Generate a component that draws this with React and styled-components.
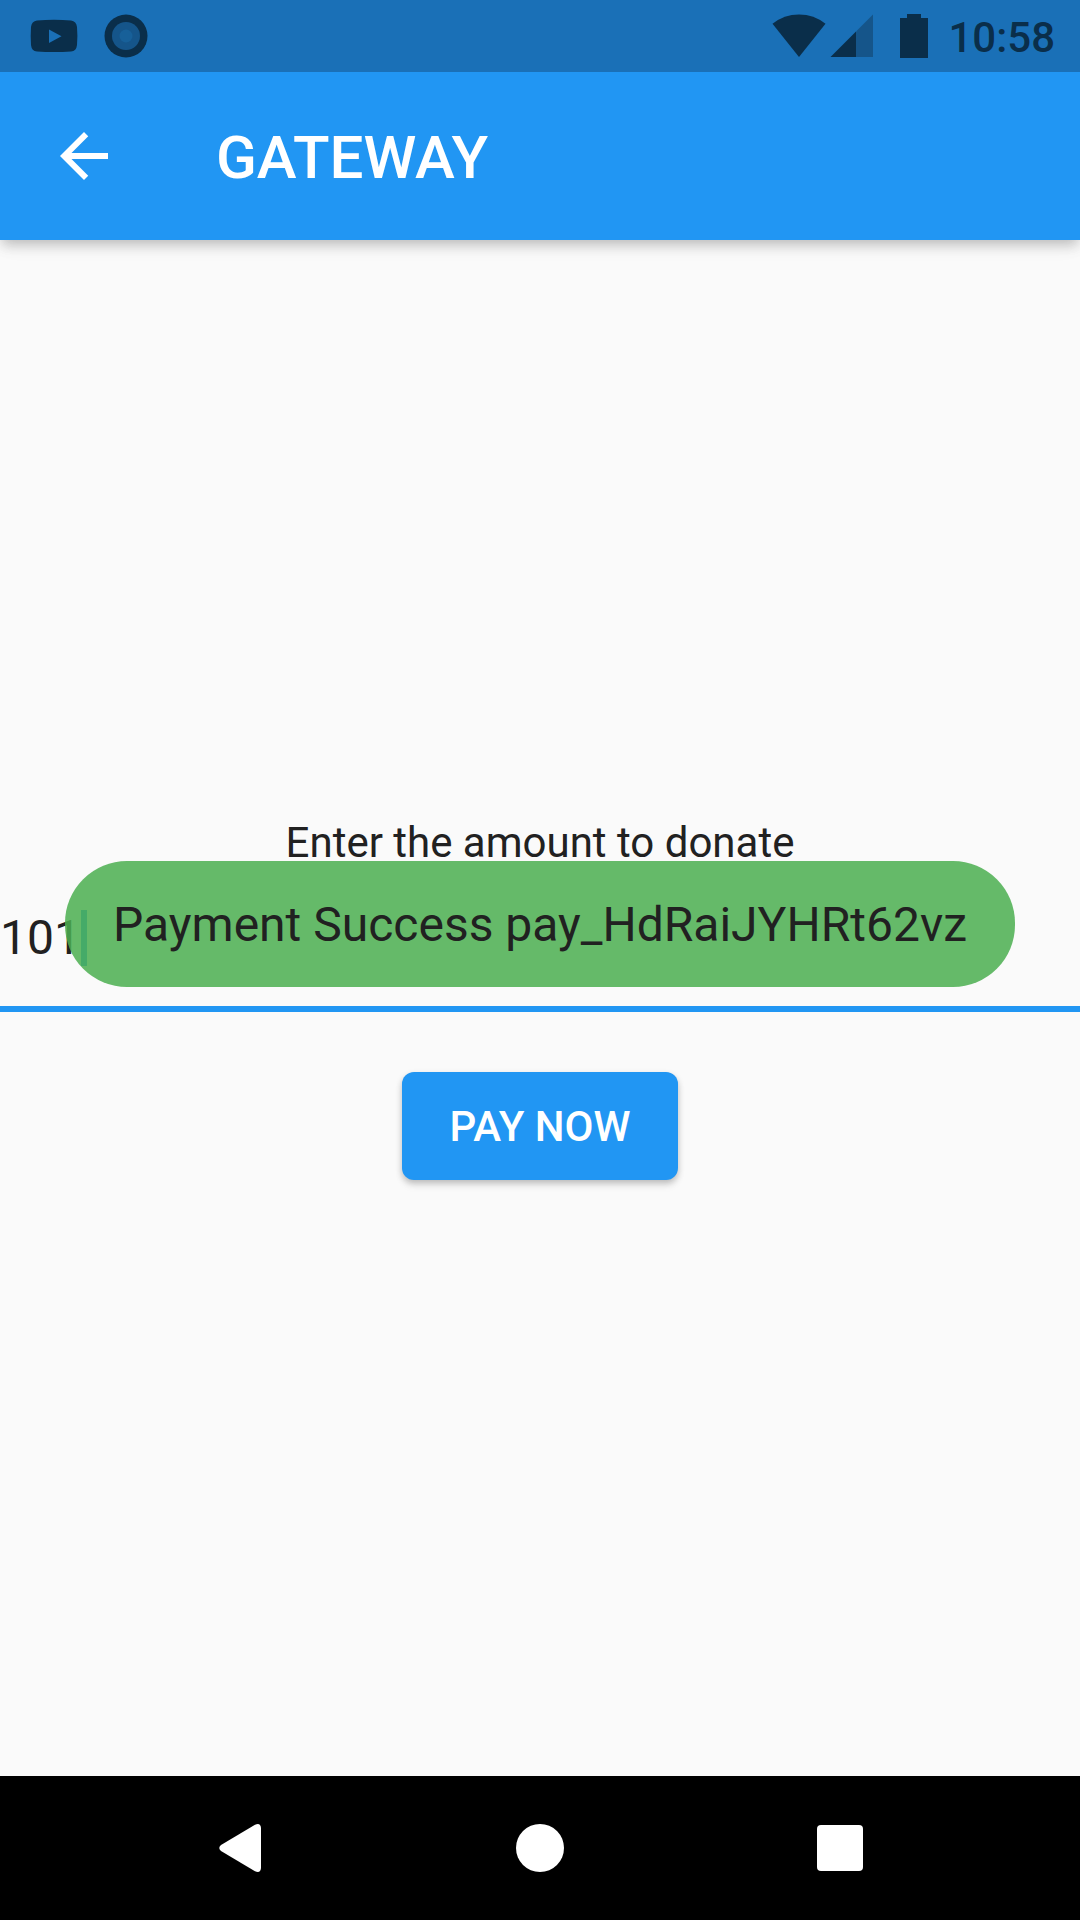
import React, { useState } from "react";
import styled, { createGlobalStyle } from "styled-components";

const GlobalStyle = createGlobalStyle`
  *, *::before, *::after { box-sizing: border-box; }
  body {
    margin: 0;
    background: #fafafa;
    color: #212121;
    font-family: Roboto, "Noto Sans", sans-serif;
  }
  button, input { font-family: inherit; }
`;

const Screen = styled.div`
  position: relative;
  display: flex;
  flex-direction: column;
  min-height: 100vh;
`;

const StatusBar = styled.div`
  position: relative;
  z-index: 1;
  display: flex;
  align-items: center;
  justify-content: space-between;
  height: 72px;
  padding: 0 25px 0 30px;
  background: #1a70b7;
  color: #0a2e4a;
`;

const StatusGroup = styled.div`
  display: flex;
  align-items: center;
  gap: ${(p) => p.$gap}px;
`;

const Clock = styled.time`
  padding-top: 4px;
  font-size: 42px;
  line-height: 48px;
  font-weight: 500;
`;

const BatterySlot = styled.span`
  display: flex;
  padding: 0 16px 0 22px;
`;

const AppBar = styled.header`
  display: flex;
  align-items: center;
  gap: 48px;
  height: 168px;
  padding: 0 48px 0 12px;
  background: #2196f3;
  color: #fff;
  box-shadow: 0 6px 12px -3px rgba(0, 0, 0, 0.2),
    0 9px 12px rgba(0, 0, 0, 0.05), 0 3px 24px rgba(0, 0, 0, 0.05);
`;

const IconButton = styled.button`
  display: flex;
  align-items: center;
  justify-content: center;
  width: 144px;
  height: 144px;
  padding: 0;
  border: 0;
  background: none;
  color: inherit;
`;

const Title = styled.h1`
  margin: 0;
  padding: 4px 0 0 12px;
  font-size: 60px;
  line-height: 72px;
  font-weight: 500;
`;

const Content = styled.main`
  flex: 1;
  display: flex;
  flex-direction: column;
  align-items: center;
  justify-content: center;
`;

const Label = styled.label`
  font-size: 42px;
  line-height: 50px;
`;

const Field = styled.div`
  position: relative;
  width: 100%;
  font-size: 48px;
  line-height: 56px;
`;

const AmountInput = styled.input`
  display: block;
  width: 100%;
  height: 144px;
  padding: 0;
  border: 0;
  border-bottom: 6px solid #2196f3;
  outline: none;
  background: transparent;
  color: inherit;
  font-size: inherit;
  line-height: inherit;
  caret-color: transparent;
`;

const Caret = styled.span`
  position: absolute;
  top: 42px;
  width: 6px;
  height: 56px;
  background: #2196f3;
`;

const PayButton = styled.button`
  height: 108px;
  margin: 60px 0 18px;
  padding: 2px 48px 0;
  border: 0;
  border-radius: 12px;
  background: #2196f3;
  color: #fff;
  font-size: 42px;
  line-height: 48px;
  font-weight: 500;
  box-shadow: 0 3px 6px rgba(0, 0, 0, 0.22), 0 6px 9px rgba(0, 0, 0, 0.06);
`;

const ToastLayer = styled.div`
  position: absolute;
  inset: 72px 0 144px;
  display: flex;
  align-items: center;
  justify-content: center;
  pointer-events: none;
`;

const Toast = styled.div`
  padding: 35px 48px 33px;
  border-radius: 62px;
  background: rgba(76, 175, 80, 0.86);
  font-size: 48px;
  line-height: 58px;
  white-space: nowrap;
`;

const NavBar = styled.nav`
  display: flex;
  justify-content: center;
  height: 144px;
  padding: 0 90px;
  background: #000;
`;

const NavButton = styled.button`
  flex: 1;
  display: flex;
  align-items: center;
  justify-content: center;
  padding: 0;
  border: 0;
  background: none;
  color: #fff;
`;

const VideoIcon = () => (
  <svg width="48" height="34" viewBox="0 0 48 34" aria-hidden="true">
    <path
      fill="currentColor"
      fillRule="evenodd"
      d="M7 1.4Q24 .2 41 1.4Q46.400 2 47 8Q47.800 17 47 26Q46.400 32 41 32.600Q24 33.600 7 32.600Q1.600 32 1 26Q.4 17 1 8Q1.600 2 7 1.400ZM19 10.500V24L31.500 17.200Z"
    />
  </svg>
);

const RecordIcon = () => (
  <svg width="44" height="44" viewBox="0 0 44 44" aria-hidden="true">
    <circle cx="22" cy="22" r="21.500" fill="currentColor" />
    <circle cx="22" cy="22" r="14" fill="#15558a" />
    <circle cx="22" cy="22" r="6.500" fill="#176099" />
  </svg>
);

const WifiIcon = () => (
  <svg width="54" height="44" viewBox="0 0 54 44" aria-hidden="true">
    <path fill="currentColor" d="M.5 9.800Q12 .5 27 .5T53.500 9.800L27 43Z" />
  </svg>
);

const SignalIcon = () => (
  <svg width="44" height="44" viewBox="0 0 44 44" aria-hidden="true">
    <path fill="#15558a" d="M43 .5V43H26V17.500Z" />
    <path fill="currentColor" d="M.5 43L26 17.500V43Z" />
  </svg>
);

const BatteryIcon = () => (
  <svg width="28" height="44" viewBox="0 0 28 44" aria-hidden="true">
    <path fill="currentColor" d="M7 0H21V4H28V44H0V4H7Z" />
  </svg>
);

const BackArrow = () => (
  <svg width="72" height="72" viewBox="0 0 24 24" aria-hidden="true">
    <path
      fill="currentColor"
      d="M20 11H7.830l5.590-5.590L12 4l-8 8 8 8 1.410-1.410L7.830 13H20v-2z"
    />
  </svg>
);

export default function App() {
  const [amount, setAmount] = useState("101");

  return (
    <>
      <GlobalStyle />
      <Screen>
        <StatusBar>
          <StatusGroup $gap={26}>
            <VideoIcon />
            <RecordIcon />
          </StatusGroup>
          <StatusGroup $gap={4}>
            <WifiIcon />
            <SignalIcon />
            <BatterySlot>
              <BatteryIcon />
            </BatterySlot>
            <Clock>10:58</Clock>
          </StatusGroup>
        </StatusBar>

        <AppBar>
          <IconButton type="button" aria-label="Back">
            <BackArrow />
          </IconButton>
          <Title>GATEWAY</Title>
        </AppBar>

        <Content>
          <Label htmlFor="amount">Enter the amount to donate</Label>
          <Field>
            <AmountInput
              id="amount"
              inputMode="numeric"
              value={amount}
              onChange={(e) => setAmount(e.target.value)}
            />
            <Caret style={{ left: `${amount.length}ch` }} />
          </Field>
          <PayButton type="button">PAY NOW</PayButton>
        </Content>

        <NavBar>
          <NavButton type="button" aria-label="Back">
            <svg width="42" height="48" viewBox="0 0 42 48" aria-hidden="true">
              <path
                fill="currentColor"
                d="M36 .8Q41.500-1.500 42 4V44Q41.500 49.500 36 47.200L2 27Q-1.500 24 2 21Z"
              />
            </svg>
          </NavButton>
          <NavButton type="button" aria-label="Home">
            <svg width="48" height="48" viewBox="0 0 48 48" aria-hidden="true">
              <circle cx="24" cy="24" r="24" fill="currentColor" />
            </svg>
          </NavButton>
          <NavButton type="button" aria-label="Recent apps">
            <svg width="46" height="46" viewBox="0 0 46 46" aria-hidden="true">
              <rect width="46" height="46" rx="4" fill="currentColor" />
            </svg>
          </NavButton>
        </NavBar>

        <ToastLayer>
          <Toast role="status">Payment Success pay_HdRaiJYHRt62vz</Toast>
        </ToastLayer>
      </Screen>
    </>
  );
}
